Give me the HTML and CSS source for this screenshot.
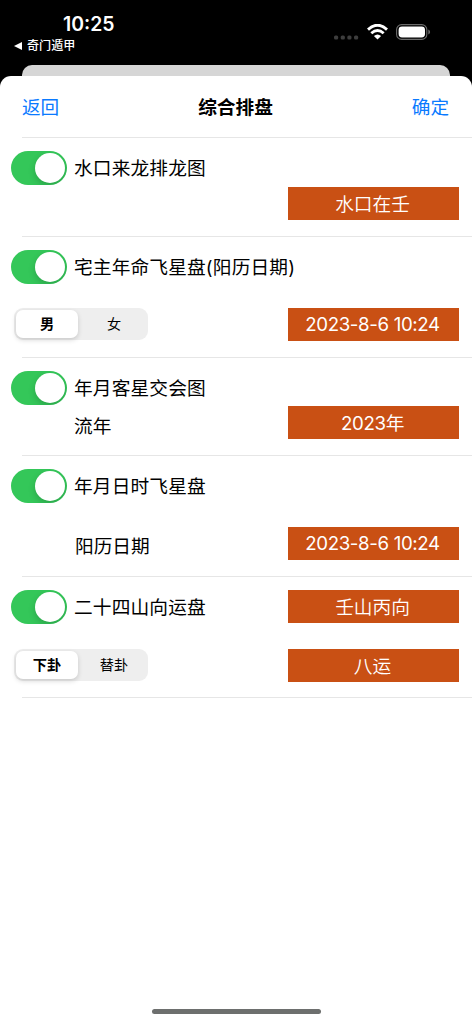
FILE: index.html
```html
<!DOCTYPE html>
<html lang="zh-CN">
<head>
<meta charset="utf-8">
<title>综合排盘</title>
<link rel="stylesheet" href="styles.css">
</head>
<body>
<div class="screen">
  <header class="status">
    <div class="status-left">
      <div class="time">10:25</div>
      <div class="back-app">
        <svg width="8" height="8" viewBox="0 0 8 8"><path d="M0 4 8 0V8Z" fill="#fff"/></svg>
        <span>奇门遁甲</span>
      </div>
    </div>
    <div class="status-icons">
      <svg class="cell" width="25" height="5" viewBox="0 0 25 5" fill="#3d3d3d"><rect x="0" y=".4" width="4.2" height="4.2" rx="1.5"/><rect x="6.7" y=".4" width="4.2" height="4.2" rx="1.5"/><rect x="13.3" y=".4" width="4.2" height="4.2" rx="1.5"/><rect x="20" y=".4" width="4.2" height="4.2" rx="1.5"/></svg>
      <svg class="wifi" width="21" height="16" viewBox="0 0 21 16" fill="none" stroke="#fff"><path d="M1 5.6Q10.5-3.1 20 5.6" stroke-width="2.9"/><path d="M4.3 9.3Q10.5 3.7 16.7 9.3" stroke-width="2.8"/><path d="M10.5 15.6 6.9 12Q10.5 8.8 14.1 12Z" fill="#fff" stroke="none"/></svg>
      <svg class="battery" width="35" height="16" viewBox="0 0 35 16"><rect x=".6" y=".6" width="30.2" height="14.8" rx="5" fill="none" stroke="#6b6b6b" stroke-width="1.1"/><rect x="2.6" y="2.5" width="26.4" height="11" rx="3.4" fill="#fff"/><path d="M32.3 5.4Q34.1 6.2 34.1 8T32.3 10.6Z" fill="#6b6b6b"/></svg>
    </div>
  </header>
  <div class="sheet-behind"></div>
  <main class="sheet">
    <nav class="nav">
      <a class="nav-link">返回</a>
      <h1 class="nav-title">综合排盘</h1>
      <a class="nav-link">确定</a>
    </nav>

    <section class="row row-short">
      <div class="left"><div class="option"><span class="switch"></span><span class="label">水口来龙排龙图</span></div></div>
      <div class="right"><div class="value">水口在壬</div></div>
    </section>

    <section class="row row-raised">
      <div class="left">
        <div class="option"><span class="switch"></span><span class="label">宅主年命飞星盘(阳历日期)</span></div>
        <div class="segment"><span class="seg on">男</span><span class="seg">女</span></div>
      </div>
      <div class="right"><div class="value latin">2023-8-6 10:24</div></div>
    </section>

    <section class="row row-short row-raised row-year">
      <div class="left">
        <div class="option"><span class="switch"></span><span class="label">年月客星交会图</span></div>
        <div class="sub sub-year">流年</div>
      </div>
      <div class="right"><div class="value latin year">2023年</div></div>
    </section>

    <section class="row">
      <div class="left">
        <div class="option"><span class="switch"></span><span class="label">年月日时飞星盘</span></div>
        <div class="sub sub-date">阳历日期</div>
      </div>
      <div class="right"><div class="value latin">2023-8-6 10:24</div></div>
    </section>

    <section class="row row-last">
      <div class="left">
        <div class="option"><span class="switch"></span><span class="label">二十四山向运盘</span></div>
        <div class="segment"><span class="seg on">下卦</span><span class="seg">替卦</span></div>
      </div>
      <div class="right"><div class="value">壬山丙向</div><div class="value">八运</div></div>
    </section>

    <div class="home"></div>
  </main>
</div>
</body>
</html>
```
FILE: styles.css
```css
* { box-sizing: border-box; }
body {
  margin: 0;
  background: #000;
  color: #000;
  font-family: Inter, "Noto Sans CJK SC", sans-serif;
  font-size: 18.7px;
}
.screen {
  width: 472px;
  height: 1024px;
  display: flex;
  flex-direction: column;
  overflow: hidden;
}
.status {
  height: 65px;
  flex: none;
  display: flex;
  justify-content: space-between;
  color: #fff;
}
.status-left { padding: 13px 0 0 14px; }
.time {
  padding-left: 49px;
  font-size: 19.4px;
  font-weight: 600;
  line-height: 22px;
}
.back-app {
  display: flex;
  align-items: center;
  gap: 5px;
  margin-top: 3px;
  font-size: 12.1px;
  font-weight: 500;
  line-height: 16px;
}
.status-icons { display: flex; padding: 24px 41px 0 0; }
.cell { margin: 11px 8px 0 0; }
.wifi { margin-right: 8px; }
.sheet-behind {
  height: 11px;
  flex: none;
  margin: 0 22px;
  background: #d6d6d6;
  border-radius: 10px 10px 0 0;
}
.sheet {
  flex: 1;
  display: flex;
  flex-direction: column;
  background: #fff;
  border-radius: 11px 11px 0 0;
}
.nav {
  height: 62px;
  flex: none;
  display: flex;
  justify-content: space-between;
  align-items: center;
  margin-left: 22px;
  padding: 0 23px 2px 0;
  border-bottom: 1px solid #e6e6e6;
}
.nav-link { color: #0a7aff; font-size: 18.6px; }
.nav-title { margin: 0; font-size: 18.7px; font-weight: 700; }
.row {
  height: 120px;
  flex: none;
  display: flex;
  justify-content: space-between;
  position: relative;
  padding: 13px 13px 16px 11px;
  margin-bottom: 1px;
}
.row::after {
  content: "";
  position: absolute;
  left: 22px;
  right: 0;
  bottom: -1px;
  height: 1px;
  background: #e6e6e6;
}
.row-short { height: 98px; }
.row-raised { padding-top: 12.5px; }
.row-year { height: 97px; }
.row-last { padding-bottom: 15px; }
.left {
  width: 200px;
  display: flex;
  flex-direction: column;
  justify-content: space-between;
}
.right {
  display: flex;
  flex-direction: column;
  justify-content: flex-end;
  gap: 26px;
}
.option {
  display: flex;
  align-items: center;
  height: 34px;
  gap: 7px;
  letter-spacing: .15px;
  white-space: nowrap;
}
.label { padding-bottom: 3px; }
.switch {
  width: 56px;
  height: 34px;
  flex: none;
  display: flex;
  justify-content: flex-end;
  padding: 2px;
  border-radius: 17px;
  background: #34c759;
  overflow: hidden;
}
.switch::after {
  content: "";
  width: 30px;
  height: 30px;
  border-radius: 50%;
  background: #fff;
  box-shadow: 0 3px 7px rgba(0, 0, 0, .18);
}
.segment {
  display: flex;
  width: 134px;
  height: 32px;
  margin: 0 0 1.5px 3px;
  padding: 2px;
  border-radius: 9px;
  background: #eee;
}
.seg {
  flex: 1;
  display: flex;
  align-items: center;
  justify-content: center;
  padding: 0 0 2px 4px;
  font-size: 14.2px;
}
.seg.on {
  flex: 0 0 62px;
  padding-left: 0;
  background: #fff;
  border-radius: 7px;
  font-weight: 600;
  box-shadow: 0 2px 5px rgba(0, 0, 0, .16);
}
.sub { margin: 0 0 -1px 63px; line-height: 28px; }
.sub-year { margin-bottom: -2px; }
.sub-date { margin-left: 64px; }
.value {
  width: 171px;
  height: 33px;
  display: flex;
  align-items: center;
  justify-content: center;
  padding: 0 2px 2px 0;
  background: #c95014;
  color: #fff;
  font-weight: 350;
}
.latin {
  padding: 0 2px 0 0;
  font-weight: 400;
  letter-spacing: -.36px;
}
.year { padding-bottom: 2px; }
.home {
  width: 169px;
  height: 5px;
  margin: auto auto 10px 152px;
  border-radius: 3px;
  background: #6d6f6e;
}
```
